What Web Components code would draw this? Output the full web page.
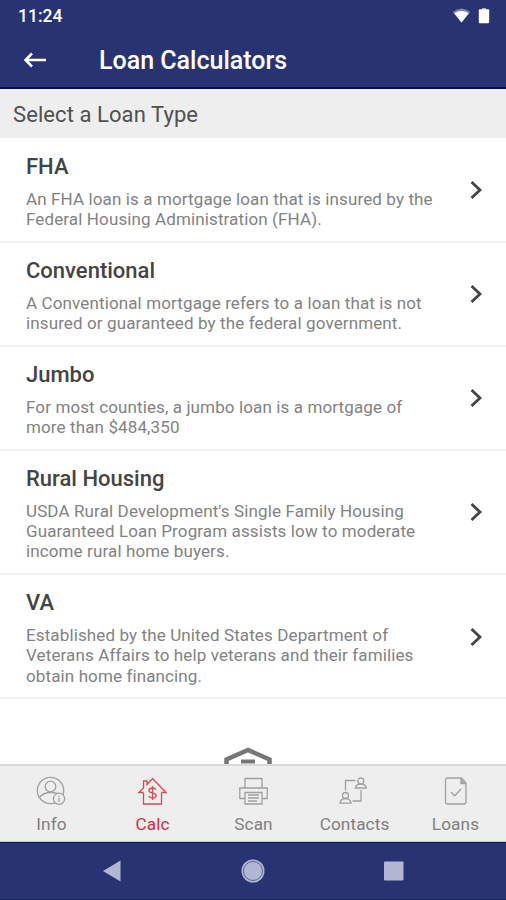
<!DOCTYPE html>
<html lang="en">
  <head>
    <meta charset="UTF-8" />
    <meta name="viewport" content="width=device-width, initial-scale=1.0" />
    <title>Loan Calculators</title>
    <style>
      html,
      body {
        margin: 0;
        height: 100%;
      }

      body {
        --navy: #283472;
        --bar: #eeeeee;
        font-family: Roboto, "Liberation Sans", sans-serif;
        background: #fff;
        overflow: hidden;
      }
    </style>
  </head>

  <body>
    <loan-app>
      <status-bar slot="top">11:24</status-bar>
      <app-header slot="top">Loan Calculators</app-header>
      <section-title slot="top">Select a Loan Type</section-title>

      <loan-row heading="FHA">An FHA loan is a mortgage loan that is insured by the<br />Federal Housing Administration (FHA).</loan-row>
      <loan-row heading="Conventional">A Conventional mortgage refers to a loan that is not<br />insured or guaranteed by the federal government.</loan-row>
      <loan-row heading="Jumbo">For most counties, a jumbo loan is a mortgage of<br />more than $484,350</loan-row>
      <loan-row heading="Rural Housing">USDA Rural Development's Single Family Housing<br />Guaranteed Loan Program assists low to moderate<br />income rural home buyers.</loan-row>
      <loan-row heading="VA">Established by the United States Department of<br />Veterans Affairs to help veterans and their families<br />obtain home financing.</loan-row>
      <housing-mark></housing-mark>

      <tab-bar slot="bottom">
        <tab-item icon="info">Info</tab-item>
        <tab-item icon="calc" active>Calc</tab-item>
        <tab-item icon="scan">Scan</tab-item>
        <tab-item icon="contacts">Contacts</tab-item>
        <tab-item icon="loans">Loans</tab-item>
      </tab-bar>
      <system-nav slot="bottom"></system-nav>
    </loan-app>

    <script>
      // registers an element whose shadow root is cloned from the given markup
      function define(name, html, setup) {
        const template = document.createElement("template");
        template.innerHTML = html;

        window.customElements.define(
          name,
          class extends HTMLElement {
            constructor() {
              super();
              this.attachShadow({ mode: "open" });
              this.shadowRoot.appendChild(template.content.cloneNode(true));
            }

            connectedCallback() {
              if (setup) setup(this, this.shadowRoot);
            }
          }
        );
      }

      define(
        "loan-app",
        `
        <style>
          :host {
            display: flex;
            flex-direction: column;
            height: 900px;
          }
          main {
            flex: 1;
            min-height: 0;
            padding-top: 1px;
            overflow: hidden;
          }
        </style>
        <slot name="top"></slot>
        <main><slot></slot></main>
        <slot name="bottom"></slot>
      `
      );

      define(
        "status-bar",
        `
        <style>
          :host {
            display: flex;
            align-items: center;
            justify-content: space-between;
            box-sizing: border-box;
            height: 32px;
            padding: 0 16px 0 18px;
            background: var(--navy);
            color: #fff;
            font-size: 17.500px;
            font-weight: 500;
          }
          div {
            display: flex;
            gap: 7px;
          }
          svg {
            display: block;
          }
        </style>
        <slot></slot>
        <div>
          <svg width="19" height="16" viewBox="0 0 19 16">
            <path d="M.7 4Q9.500-3 18.300 4L9.500 14.500Z" fill="#fff" opacity=".4" />
            <path d="M2.300 5.200Q9.500 .8 16.700 5.200L9.500 14.500Z" fill="#fff" />
          </svg>
          <svg width="12" height="16" viewBox="0 0 12 16">
            <path d="M4 0h4v1.500H4z" fill="#fff" opacity=".6" />
            <rect x=".8" y="1.300" width="10.400" height="14" rx="1" fill="#fff" />
          </svg>
        </div>
      `
      );

      define(
        "app-header",
        `
        <style>
          :host {
            display: flex;
            align-items: center;
            box-sizing: border-box;
            height: 57px;
            padding-left: 23px;
            gap: 52px;
            background: var(--navy);
            border-bottom: 2px solid #050b5e;
            color: #fff;
            font-size: 25px;
            font-weight: 500;
          }
          span {
            padding-top: 2px;
          }
        </style>
        <svg width="24" height="16" viewBox="0 0 24 16" fill="none" stroke="#fff" stroke-width="2.500">
          <path d="M23 8H2.500M9 1.500L2.500 8 9 14.500" />
        </svg>
        <span><slot></slot></span>
      `
      );

      define(
        "section-title",
        `
        <style>
          :host {
            display: flex;
            align-items: center;
            box-sizing: border-box;
            height: 49px;
            padding: 1px 13px 0;
            background: var(--bar);
            color: #505050;
            font-size: 22px;
            letter-spacing: 0.08px;
          }
        </style>
        <slot></slot>
      `
      );

      define(
        "loan-row",
        `
        <style>
          :host {
            display: flex;
            align-items: center;
            justify-content: space-between;
            box-sizing: border-box;
            padding: 15px 23px 11.600px 26px;
            border-bottom: 2px solid #f5f5f5;
            background: #fff;
          }
          h2 {
            margin: 0 0 9px;
            color: #444;
            font-size: 22px;
            font-weight: 500;
            line-height: 26px;
          }
          p {
            margin: 0;
            color: #828282;
            font-size: 17px;
            line-height: 20.200px;
            letter-spacing: 0.12px;
            white-space: nowrap;
          }
          svg {
            margin-bottom: 3px;
          }
        </style>
        <div>
          <h2></h2>
          <p><slot></slot></p>
        </div>
        <svg width="14" height="20" viewBox="0 0 14 20" fill="none" stroke="#444" stroke-width="2.800">
          <path d="M2.500 2L11 10l-8.500 8" />
        </svg>
      `,
        (host, root) => {
          root.querySelector("h2").textContent = host.getAttribute("heading");
        }
      );

      // equal housing logo, the lower part runs under the tab bar
      define(
        "housing-mark",
        `
        <style>
          :host {
            display: flex;
            justify-content: center;
            padding: 48px 11px 0 0;
          }
        </style>
        <svg width="48" height="40" viewBox="0 0 48 40" fill="none" stroke="#777">
          <path d="M2.500 18v-5.500L24 3l21.500 9.500V18" stroke-width="4.500" />
          <path d="M17 14.500h14M17 21h14" stroke-width="4" />
        </svg>
      `
      );

      define(
        "tab-bar",
        `
        <style>
          :host {
            display: grid;
            grid-template-columns: repeat(5, 1fr);
            box-sizing: border-box;
            height: 78px;
            padding-left: 1px;
            background: var(--bar);
            border-top: 2px solid #dadada;
            border-bottom: 1px solid #c4c4cc;
          }
        </style>
        <slot></slot>
      `
      );

      const icons = {
        info: `
          <circle cx="14.500" cy="14.500" r="13.200" />
          <circle cx="14.500" cy="10.500" r="5.300" />
          <path d="M3.500 21.500c3-4 6.500-5 11-5 4 0 6.500.5 8.500 1.500" />
          <circle cx="23" cy="22.800" r="5.600" fill="#eee" />
          <path d="M23 22v4M23 19.500v1.200" />`,
        calc: `
          <path d="M6.500 16.500V28h18V16.500M6.500 16.500H1.800l4.700-4.500V5h3.500v3.500l5.500-6L29 16.500h-4.500" />
          <path d="M19 13.700c-.7-1.300-2-1.700-3.500-1.700-2 0-3.500.8-3.500 2.500 0 3.800 7.200 1.500 7.200 5 0 1.700-1.700 2.500-3.700 2.500-1.800 0-3.200-.7-3.700-2M15.500 10v14" />`,
        scan: `
          <path d="M7 12V2.500h17V12M7 22.500H1.800V12h27.400v10.500H24M7 16.500h17V28H7zM10 19h11M10 22h11M10 25h9" />`,
        contacts: `
          <path d="M6.500 14.500V4.500h10M22 14v11h-8.500" />
          <circle cx="21.800" cy="5" r="3" /><path d="M16.300 12c.5-3 2.500-4 5.500-4s5 1 5.500 4z" />
          <circle cx="6.500" cy="19.500" r="3" /><path d="M1 27.200c.5-3.500 2.500-4.500 5.500-4.500s5 1 5.500 4.500z" />`,
        loans: `
          <path d="M21.500 2H7.500a2 2 0 0 0-2 2v22a2 2 0 0 0 2 2h16.500a2 2 0 0 0 2-2V7z" />
          <path d="M21 2.500v5h5" fill="#aaa" />
          <path d="M11 16l3.700 3.700 6.500-7" />`,
      };

      define(
        "tab-item",
        `
        <style>
          :host {
            display: flex;
            flex-direction: column;
            align-items: center;
            padding-top: 10px;
            color: #808080;
            --line: #a0a0a0;
            font-size: 17.200px;
            line-height: 20px;
            letter-spacing: 0.1px;
          }
          :host([active]) {
            color: #d32f3c;
            --line: #d94a54;
          }
          svg {
            margin: 0 1px 8px 0;
            stroke: var(--line);
            fill: none;
            stroke-width: 1.300;
          }
        </style>
        <svg width="30" height="30" viewBox="0 0 30 30"></svg>
        <span><slot></slot></span>
      `,
        (host, root) => {
          root.querySelector("svg").innerHTML = icons[host.getAttribute("icon")];
        }
      );

      define(
        "system-nav",
        `
        <style>
          :host {
            display: flex;
            justify-content: center;
            align-items: center;
            gap: 117px;
            box-sizing: border-box;
            height: 58px;
            background: var(--navy);
            border-top: 1px solid #0b1763;
            border-bottom: 1px solid #1b2356;
          }
        </style>
        <svg width="24" height="24" viewBox="0 0 24 24"><path d="M3 12L20.500 1.500v21z" fill="#b3b8d2" /></svg>
        <svg width="24" height="24" viewBox="0 0 24 24">
          <circle cx="12" cy="12" r="11.500" fill="#b3b8d2" />
          <circle cx="12" cy="12" r="9.500" fill="none" stroke="#59649a" stroke-width="1" />
        </svg>
        <svg width="24" height="24" viewBox="0 0 24 24"><rect x="2" y="2.500" width="19.500" height="19" rx="1" fill="#b3b8d2" /></svg>
      `
      );
    </script>
  </body>
</html>
